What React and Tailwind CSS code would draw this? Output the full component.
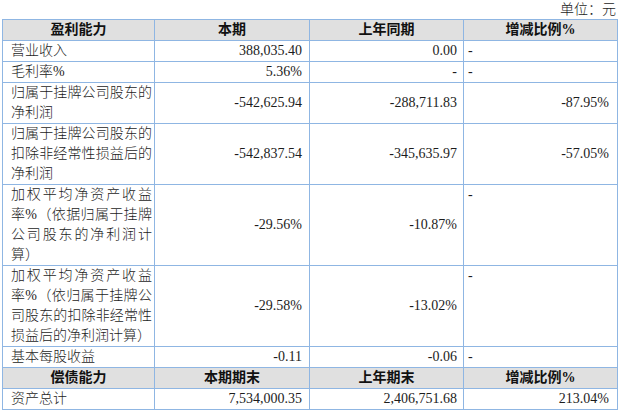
const rows = [
  { label: '营业收入', cur: '388,035.40', prev: '0.00', rate: '-', left: true },
  { label: '毛利率%', cur: '5.36%', prev: '-', rate: '-', left: true },
  { label: '归属于挂牌公司股东的净利润', cur: '-542,625.94', prev: '-288,711.83', rate: '-87.95%' },
  { label: '归属于挂牌公司股东的扣除非经常性损益后的净利润', cur: '-542,837.54', prev: '-345,635.97', rate: '-57.05%' },
  { label: '加权平均净资产收益率%（依据归属于挂牌公司股东的净利润计算）', cur: '-29.56%', prev: '-10.87%', rate: '-', left: true, top: true },
  { label: '加权平均净资产收益率%（依归属于挂牌公司股东的扣除非经常性损益后的净利润计算）', cur: '-29.58%', prev: '-13.02%', rate: '-', left: true, top: true },
  { label: '基本每股收益', cur: '-0.11', prev: '-0.06', rate: '-', left: true },
];

const cell = 'border border-[#8fb6e3] p-0';

function Header({ cols }) {
  return (
    <tr className="bg-[#e0e0e0]">
      {cols.map((c) => (
        <th key={c} className={`${cell} text-center font-bold text-[#111]`}>
          {c}
        </th>
      ))}
    </tr>
  );
}

export default function App() {
  return (
    <div
      className="w-[622px] h-[417px] bg-white text-[14px] leading-[20px] text-[#1c1c1c] overflow-hidden"
      style={{ fontFamily: '"Liberation Serif", "Noto Sans CJK SC", serif' }}
    >
      <div className="h-[19px] leading-[19px] text-right pr-[6px] font-light">单位：元</div>
      <table className="ml-[2px] w-[615px] table-fixed border-collapse">
        <colgroup>
          <col className="w-[152px]" />
          <col className="w-[155px]" />
          <col className="w-[154px]" />
          <col className="w-[154px]" />
        </colgroup>
        <tbody>
          <Header cols={['盈利能力', '本期', '上年同期', '增减比例%']} />
          {rows.map((r) => (
            <tr key={r.label}>
              <td className={`${cell} pl-[8px] pr-[2px] text-justify align-top font-light`}>{r.label}</td>
              <td className={`${cell} pr-[7px] text-right align-middle`}>{r.cur}</td>
              <td className={`${cell} pr-[6px] text-right align-middle`}>{r.prev}</td>
              <td
                className={`${cell} ${r.left ? 'pl-[4px] text-left' : 'pr-[8px] text-right'} ${
                  r.top ? 'align-top' : 'align-middle'
                }`}
              >
                {r.rate}
              </td>
            </tr>
          ))}
          <Header cols={['偿债能力', '本期期末', '上年期末', '增减比例%']} />
          <tr>
            <td className={`${cell} pl-[8px] font-light`}>资产总计</td>
            <td className={`${cell} pr-[7px] text-right`}>7,534,000.35</td>
            <td className={`${cell} pr-[6px] text-right`}>2,406,751.68</td>
            <td className={`${cell} pr-[8px] text-right`}>213.04%</td>
          </tr>
        </tbody>
      </table>
    </div>
  );
}
